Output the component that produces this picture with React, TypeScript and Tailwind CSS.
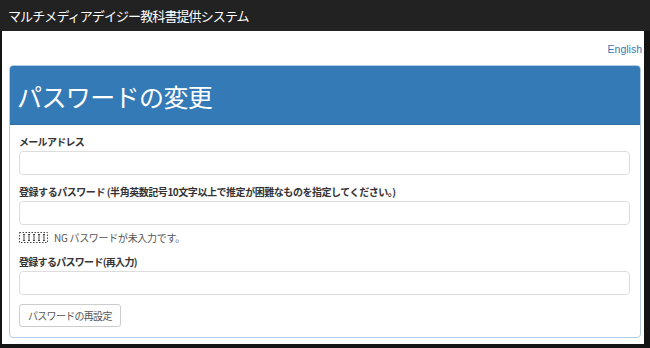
import React from 'react';

const font = { fontFamily: '"Noto Sans CJK JP", "Noto Sans", "Liberation Sans", sans-serif' };

const NgGlyph: React.FC = () => (
  <svg width="29" height="11" viewBox="0 0 29 11" className="shrink-0">
    <rect x="0.5" y="0.5" width="28" height="10" fill="none" stroke="#444" strokeDasharray="1.5 1.5" />
    {[5, 10, 15, 20, 25].map((x) => (
      <g key={x} stroke="#444" strokeWidth="1">
        <line x1={x - 1} y1="2.5" x2={x + 1} y2="2.5" />
        <line x1={x} y1="2.5" x2={x} y2="8.5" />
        <line x1={x - 1} y1="8.5" x2={x + 1} y2="8.5" />
      </g>
    ))}
  </svg>
);

const Field: React.FC<{ label: string; className?: string; gap?: string; wide?: boolean }> = ({
  label,
  className,
  gap,
  wide,
}) => (
  <div className={className}>
    <label
      className={`block h-[15px] text-[10px] leading-[17px] font-bold text-[#333] whitespace-nowrap ${
        wide ? 'tracking-[-0.45px]' : 'tracking-[-0.7px]'
      }`}
    >
      {label}
    </label>
    <input
      type="text"
      className={`${gap ?? 'mt-[3px]'} block w-full h-[24px] rounded-[4px] border border-[#ddd] bg-white outline-none`}
    />
  </div>
);

export default function App() {
  return (
    <div className="w-[650px] h-[348px] bg-[#141414] flex flex-col overflow-hidden" style={font}>
      <div className="h-[31px] bg-[#222] flex items-center pl-[8px] text-[13px] tracking-[-0.9px] text-white shrink-0">
        マルチメディアデイジー教科書提供システム
      </div>
      <div className="flex-1 ml-[2px] mr-[6px] mb-[4px] bg-white flex flex-col">
        <div className="flex justify-end pt-[12px] pr-[2px] h-[34px]">
          <a className="text-[10.5px] leading-[13px] text-[#337ab7] font-['Liberation_Sans',sans-serif]">English</a>
        </div>
        <div className="ml-[7px] mr-[3px] border border-[#b5cde4] rounded-[4px] overflow-hidden">
          <div className="h-[59px] bg-[#337ab7] border-b border-[#2e6da4] flex items-center pl-[7px]">
            <h1 className="text-[25px] tracking-[-0.6px] text-white leading-none pt-[2px]">パスワードの変更</h1>
          </div>
          <div className="pl-[9px] pr-[10px] pt-[8px] pb-[10px]">
            <Field label="メールアドレス" />
            <Field
              className="mt-[8px]"
              wide
              label="登録するパスワード (半角英数記号10文字以上で推定が困難なものを指定してください。)"
            />
            <div className="mt-[5px] flex items-center gap-[6px] h-[14px] text-[10px] tracking-[-0.3px] text-[#555]">
              <NgGlyph />
              <span>NG パスワードが未入力です。</span>
            </div>
            <Field className="mt-[9px]" label="登録するパスワード(再入力)" />
            <button className="mt-[9px] block h-[23px] px-[8px] rounded-[3px] border border-[#ccc] bg-white text-[10px] tracking-[-0.7px] text-[#555]">
              パスワードの再設定
            </button>
          </div>
        </div>
      </div>
    </div>
  );
}
